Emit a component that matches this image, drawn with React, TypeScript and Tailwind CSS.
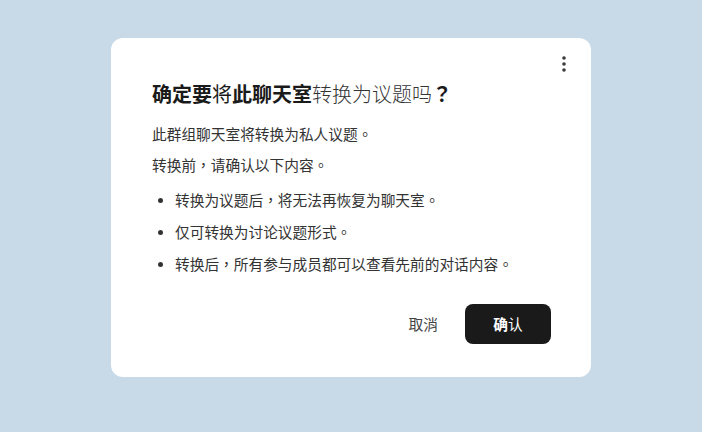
const bullets = [
  '转换为议题后，将无法再恢复为聊天室。',
  '仅可转换为讨论议题形式。',
  '转换后，所有参与成员都可以查看先前的对话内容。',
]

function KebabIcon() {
  return (
    <svg width="6" height="18" viewBox="0 0 6 18" fill="#3a3a3a">
      <circle cx="3" cy="3" r="1.8" />
      <circle cx="3" cy="9" r="1.8" />
      <circle cx="3" cy="15" r="1.8" />
    </svg>
  )
}

export default function App() {
  return (
    <div
      className="w-[702px] h-[432px] bg-[#c8dae7] flex items-start justify-center pt-[38px]"
      style={{ fontFamily: '"Noto Sans CJK TC", "Noto Sans", sans-serif' }}
    >
      <div className="relative w-[480px] h-[339px] bg-white rounded-[12px] px-[41px] pt-[38px]">
        <button className="absolute left-[450px] top-[17px] p-0">
          <KebabIcon />
        </button>

        <h2 className="text-[20px] leading-[36px] text-[#1a1a1a]">
          <span className="font-bold">确定要</span>
          <span>将</span>
          <span className="font-bold">此聊天室</span>
          <span className="font-light text-[#333]">转换为议题吗</span>
          <span className="font-bold">？</span>
        </h2>

        <p className="mt-[11px] text-[14.7px] leading-[22px] text-[#333]">此群组聊天室将转换为私人议题。</p>
        <p className="mt-[9px] text-[14.7px] leading-[22px] text-[#333]">转换前，请确认以下内容。</p>

        <ul className="mt-[13px] flex flex-col gap-[10px]">
          {bullets.map((b) => (
            <li key={b} className="flex items-center text-[14.7px] leading-[22px] text-[#333]">
              <span className="w-[5px] h-[5px] rounded-full bg-[#333] ml-[6px] mr-[12px]" />
              {b}
            </li>
          ))}
        </ul>

        <div className="absolute right-[40px] bottom-[33px] flex items-center gap-[27px]">
          <button className="text-[14.7px] text-[#444]">取消</button>
          <button className="w-[86px] h-[40px] rounded-[8px] bg-[#1a1a1a] text-white text-[14.7px]">
            <span className="font-bold">确</span>认
          </button>
        </div>
      </div>
    </div>
  )
}
